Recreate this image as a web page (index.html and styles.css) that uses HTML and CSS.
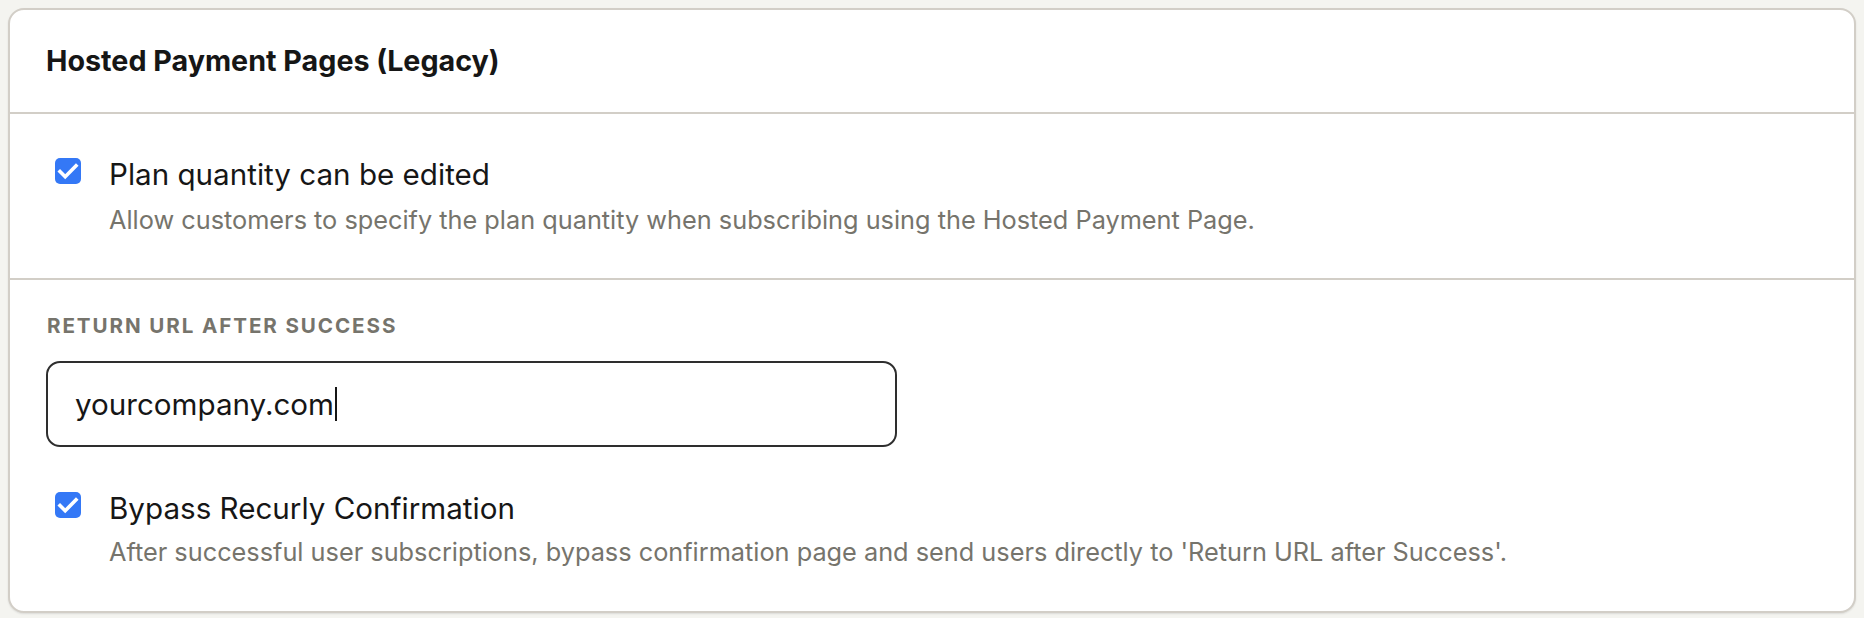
FILE: index.html
```html
<!DOCTYPE html>
<html lang="en">
<head>
<meta charset="utf-8">
<title>Hosted Payment Pages (Legacy)</title>
<link rel="stylesheet" href="styles.css">
</head>
<body>
<div class="card">
  <div class="card-header">
    <h2 class="card-title">Hosted Payment Pages (Legacy)</h2>
  </div>
  <div class="section section-first">
    <div class="check-row">
      <span class="checkbox"><svg viewBox="0 0 26 26" width="26" height="26"><polyline points="5,13.5 10.2,18.8 21,7.8" fill="none" stroke="#fff" stroke-width="3.6" stroke-linecap="square" stroke-linejoin="miter"/></svg></span>
      <div class="check-text">
        <div class="check-label">Plan quantity can be edited</div>
        <div class="check-desc">Allow customers to specify the plan quantity when subscribing using the Hosted Payment Page.</div>
      </div>
    </div>
  </div>
  <div class="section section-last">
    <div class="field-label">RETURN URL AFTER SUCCESS</div>
    <div class="text-input"><span class="input-value">yourcompany.com</span><span class="caret"></span></div>
    <div class="check-row check-row-spaced">
      <span class="checkbox"><svg viewBox="0 0 26 26" width="26" height="26"><polyline points="5,13.5 10.2,18.8 21,7.8" fill="none" stroke="#fff" stroke-width="3.6" stroke-linecap="square" stroke-linejoin="miter"/></svg></span>
      <div class="check-text">
        <div class="check-label">Bypass Recurly Confirmation</div>
        <div class="check-desc check-desc-tight">After successful user subscriptions, bypass confirmation page and send users directly to 'Return URL after Success'.</div>
      </div>
    </div>
  </div>
</div>
</body>
</html>
```

FILE: styles.css
```css
html, body {
  margin: 0;
  padding: 0;
}
body {
  background: #f4f4f0;
  padding: 8px;
  font-family: "Inter", "Noto Sans", sans-serif;
  color: #161616;
}
.card {
  background: #ffffff;
  border: 2px solid #d2cec7;
  border-radius: 16px;
  box-shadow: 0 1px 2px rgba(0, 0, 0, 0.10);
  box-sizing: border-box;
  height: 605px;
}
.card-header {
  height: 104px;
  box-sizing: border-box;
  padding: 0 36px;
  display: flex;
  align-items: center;
  border-bottom: 2px solid #d2cec7;
}
.card-title {
  margin: 0;
  font-size: 28.7px;
  font-weight: 700;
  line-height: 36px;
  color: #161616;
}
.section {
  padding: 0 36px;
}
.section-first {
  height: 166px;
  box-sizing: border-box;
  padding-top: 42px;
  border-bottom: 2px solid #d2cec7;
}
.section-last {
  padding-top: 32px;
}
.check-row {
  display: flex;
  align-items: flex-start;
  padding-left: 9px;
}
.check-row-spaced {
  margin-top: 43px;
}
.checkbox {
  flex: none;
  width: 26px;
  height: 26px;
  margin-top: 2px;
  border-radius: 5px;
  background: #3478f6;
  display: block;
}
.checkbox svg {
  display: block;
}
.check-text {
  margin-left: 28px;
}
.check-label {
  font-size: 29.6px;
  line-height: 36px;
  color: #161616;
}
.check-desc {
  margin-top: 12px;
  font-size: 25.3px;
  line-height: 32px;
  color: #76746c;
}
.check-desc-tight {
  margin-top: 10px;
}
.field-label {
  font-size: 20.6px;
  line-height: 28px;
  font-weight: 700;
  letter-spacing: 1.9px;
  color: #76746c;
  padding-left: 1px;
}
.text-input {
  margin-top: 21px;
  width: 851px;
  height: 86px;
  box-sizing: border-box;
  border: 2px solid #2e2e2e;
  border-radius: 14px;
  padding: 0 27px;
  display: flex;
  align-items: center;
  font-size: 29.6px;
  color: #161616;
}
.caret {
  display: inline-block;
  width: 2px;
  height: 34px;
  background: #161616;
  margin-left: 1px;
}
```
